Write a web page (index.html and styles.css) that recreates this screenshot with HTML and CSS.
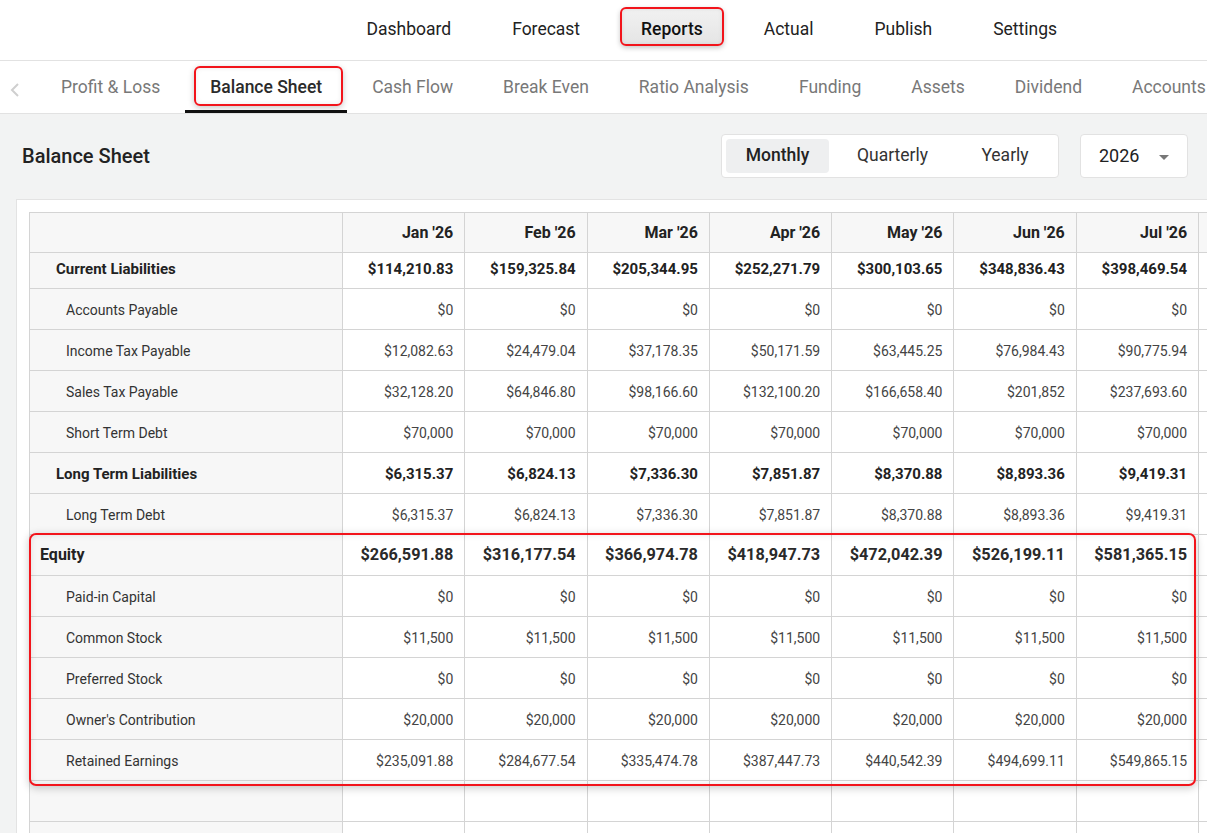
FILE: index.html
```html
<!DOCTYPE html>
<html>
<head>
<meta charset="utf-8">
<link rel="stylesheet" href="styles.css">
</head>
<body>
<header class="topnav">
  <nav class="topnav-items">
    <a class="top-item">Dashboard</a>
    <a class="top-item">Forecast</a>
    <a class="top-item top-item-active">Reports</a>
    <a class="top-item">Actual</a>
    <a class="top-item">Publish</a>
    <a class="top-item">Settings</a>
  </nav>
</header>
<div class="subnav">
  <div class="chev">
    <svg width="10" height="16" viewBox="0 0 10 16"><polyline points="8,2 2,8 8,14" fill="none" stroke="#cfcfcf" stroke-width="2"/></svg>
  </div>
  <a class="tab">Profit &amp; Loss</a>
  <a class="tab tab-active">Balance Sheet<span class="tab-mark"></span></a>
  <a class="tab">Cash Flow</a>
  <a class="tab">Break Even</a>
  <a class="tab">Ratio Analysis</a>
  <a class="tab">Funding</a>
  <a class="tab">Assets</a>
  <a class="tab">Dividend</a>
  <a class="tab">Accounts</a>
</div>
<main class="content">
  <div class="toolbar">
    <h1 class="title">Balance Sheet</h1>
    <div class="spacer"></div>
    <div class="segmented">
      <button class="seg seg-active">Monthly</button>
      <button class="seg">Quarterly</button>
      <button class="seg">Yearly</button>
    </div>
    <div class="year">
      <span>2026</span>
      <span class="caret"></span>
    </div>
  </div>
  <section class="card">
    <div class="table-wrap">
      <table class="grid">
        <colgroup>
          <col class="c-label"><col class="c-m"><col class="c-m"><col class="c-m"><col class="c-m"><col class="c-m"><col class="c-m"><col class="c-m"><col class="c-m">
        </colgroup>
        <thead>
          <tr class="r-head"><th class="lbl"></th><th>Jan '26</th><th>Feb '26</th><th>Mar '26</th><th>Apr '26</th><th>May '26</th><th>Jun '26</th><th>Jul '26</th><th></th></tr>
        </thead>
        <tbody>
          <tr class="r-group r-first"><td class="lbl">Current Liabilities</td><td>$114,210.83</td><td>$159,325.84</td><td>$205,344.95</td><td>$252,271.79</td><td>$300,103.65</td><td>$348,836.43</td><td>$398,469.54</td><td></td></tr>
          <tr class="r-child"><td class="lbl">Accounts Payable</td><td>$0</td><td>$0</td><td>$0</td><td>$0</td><td>$0</td><td>$0</td><td>$0</td><td></td></tr>
          <tr class="r-child"><td class="lbl">Income Tax Payable</td><td>$12,082.63</td><td>$24,479.04</td><td>$37,178.35</td><td>$50,171.59</td><td>$63,445.25</td><td>$76,984.43</td><td>$90,775.94</td><td></td></tr>
          <tr class="r-child"><td class="lbl">Sales Tax Payable</td><td>$32,128.20</td><td>$64,846.80</td><td>$98,166.60</td><td>$132,100.20</td><td>$166,658.40</td><td>$201,852</td><td>$237,693.60</td><td></td></tr>
          <tr class="r-child"><td class="lbl">Short Term Debt</td><td>$70,000</td><td>$70,000</td><td>$70,000</td><td>$70,000</td><td>$70,000</td><td>$70,000</td><td>$70,000</td><td></td></tr>
          <tr class="r-group"><td class="lbl">Long Term Liabilities</td><td>$6,315.37</td><td>$6,824.13</td><td>$7,336.30</td><td>$7,851.87</td><td>$8,370.88</td><td>$8,893.36</td><td>$9,419.31</td><td></td></tr>
          <tr class="r-child"><td class="lbl">Long Term Debt</td><td>$6,315.37</td><td>$6,824.13</td><td>$7,336.30</td><td>$7,851.87</td><td>$8,370.88</td><td>$8,893.36</td><td>$9,419.31</td><td></td></tr>
          <tr class="r-section"><td class="lbl">Equity</td><td>$266,591.88</td><td>$316,177.54</td><td>$366,974.78</td><td>$418,947.73</td><td>$472,042.39</td><td>$526,199.11</td><td>$581,365.15</td><td></td></tr>
          <tr class="r-child"><td class="lbl">Paid-in Capital</td><td>$0</td><td>$0</td><td>$0</td><td>$0</td><td>$0</td><td>$0</td><td>$0</td><td></td></tr>
          <tr class="r-child"><td class="lbl">Common Stock</td><td>$11,500</td><td>$11,500</td><td>$11,500</td><td>$11,500</td><td>$11,500</td><td>$11,500</td><td>$11,500</td><td></td></tr>
          <tr class="r-child"><td class="lbl">Preferred Stock</td><td>$0</td><td>$0</td><td>$0</td><td>$0</td><td>$0</td><td>$0</td><td>$0</td><td></td></tr>
          <tr class="r-child"><td class="lbl">Owner's Contribution</td><td>$20,000</td><td>$20,000</td><td>$20,000</td><td>$20,000</td><td>$20,000</td><td>$20,000</td><td>$20,000</td><td></td></tr>
          <tr class="r-child"><td class="lbl">Retained Earnings</td><td>$235,091.88</td><td>$284,677.54</td><td>$335,474.78</td><td>$387,447.73</td><td>$440,542.39</td><td>$494,699.11</td><td>$549,865.15</td><td></td></tr>
          <tr class="r-child"><td class="lbl"></td><td></td><td></td><td></td><td></td><td></td><td></td><td></td><td></td></tr>
          <tr class="r-child"><td class="lbl"></td><td></td><td></td><td></td><td></td><td></td><td></td><td></td><td></td></tr>
        </tbody>
      </table>
      <div class="equity-mark"></div>
    </div>
  </section>
</main>
</body>
</html>
```

FILE: styles.css
```css
html, body {
  margin: 0;
  padding: 0;
  overflow: hidden;
  width: 1207px;
  height: 833px;
}
body {
  font-family: Roboto, "Liberation Sans", sans-serif;
  color: #222;
  background: #f2f3f3;
}
a { text-decoration: none; cursor: pointer; }

.topnav {
  height: 61px;
  box-sizing: border-box;
  background: #fff;
  border-bottom: 1px solid #e2e2e2;
}
.topnav-items {
  display: flex;
  gap: 18px;
  padding: 7px 0 0 345px;
}
.top-item {
  display: flex;
  align-items: center;
  height: 39px;
  box-sizing: border-box;
  padding: 5px 19.5px 0;
  border: 2px solid transparent;
  border-radius: 6px;
  font-size: 17.5px;
  color: #222;
}
.top-item-active {
  border-color: #f2141b;
  background: linear-gradient(#f1f1f1, #e5e5e5);
  box-shadow: 0 2px 5px rgba(0,0,0,0.22), inset 0 0 4px rgba(0,0,0,0.08);
  font-weight: 500;
  color: #111;
}

.subnav {
  display: flex;
  height: 53px;
  box-sizing: border-box;
  background: #fff;
  border-bottom: 1px solid #e2e2e2;
  white-space: nowrap;
}
.chev {
  width: 36px;
  flex: none;
  display: flex;
  align-items: center;
  padding-left: 10px;
  box-sizing: border-box;
  padding-top: 6px;
}
.tab {
  position: relative;
  flex: none;
  display: flex;
  align-items: center;
  height: 52px;
  box-sizing: border-box;
  padding: 0 25px 1px;
  font-size: 17.5px;
  color: #787878;
}
.tab-active {
  color: #2b2b2b;
  font-weight: 500;
  border-bottom: 3px solid #111;
  padding-top: 2px;
  padding-bottom: 0;
}
.tab-mark {
  position: absolute;
  left: 9px;
  top: 5px;
  right: 4px;
  height: 40px;
  box-sizing: border-box;
  border: 2px solid #f2141b;
  border-radius: 6px;
  box-shadow: 0 2px 6px rgba(0,0,0,0.22), inset 0 0 5px rgba(0,0,0,0.08);
}

.content {
  background: #f2f3f3;
}
.toolbar {
  display: flex;
  align-items: center;
  padding: 20px 19px 21px 22px;
}
.title {
  margin: 0;
  font-size: 20px;
  font-weight: 500;
  color: #222;
}
.spacer { flex: 1; }
.segmented {
  display: grid;
  grid-template-columns: 103px 127px 98px;
  height: 44px;
  box-sizing: border-box;
  padding: 4px;
  background: #fff;
  border: 1px solid #e2e2e2;
  border-radius: 4px;
}
.seg {
  border: 0;
  background: transparent;
  font-family: inherit;
  font-size: 17.5px;
  color: #333;
  border-radius: 4px;
  padding: 0 0 2px;
}
.seg-active {
  background: #eeeff0;
  font-weight: 500;
  color: #222;
}
.year {
  margin-left: 21px;
  width: 108px;
  height: 44px;
  box-sizing: border-box;
  display: flex;
  align-items: center;
  padding: 0 18px 2px 18px;
  justify-content: space-between;
  background: #fff;
  border: 1px solid #e2e2e2;
  border-radius: 4px;
  font-size: 18px;
  color: #222;
}
.caret {
  width: 0;
  height: 0;
  border-left: 5px solid transparent;
  border-right: 5px solid transparent;
  border-top: 5px solid #777;
  margin-top: 4px;
}

.card {
  margin-left: 16px;
  width: 1400px;
  background: #fff;
  border: 1px solid #e3e3e3;
  padding: 12px;
  box-sizing: border-box;
  height: 700px;
}
.table-wrap {
  position: relative;
}
.grid {
  border-collapse: collapse;
  table-layout: fixed;
  width: 1292px;
}
.c-label { width: 313px; }
.c-m { width: 122.3px; }
.grid th, .grid td {
  border: 1px solid #d4d4d4;
  padding: 0 11px 0 0;
  text-align: right;
  white-space: nowrap;
  overflow: hidden;
}
.grid th {
  height: 39px;
  background: #f7f7f7;
  font-size: 16px;
  font-weight: 700;
  color: #222;
}
.grid td {
  height: 38px;
  padding-top: 2px;
  font-size: 14px;
  color: #444;
}
.grid .lbl {
  text-align: left;
  background: #f7f7f7;
  padding-left: 36px;
  color: #333;
}
.grid .r-first td { height: 31px; padding-top: 0; padding-bottom: 4px; }
.r-group td {
  font-size: 15px;
  font-weight: 700;
  color: #222;
}
.grid .r-group .lbl { padding-left: 26px; color: #222; }
.grid .r-section td {
  height: 38px;
  padding-top: 0;
  padding-bottom: 2px;
  font-size: 16.3px;
  font-weight: 700;
  color: #2a2a2a;
}
.grid .r-section .lbl { padding-left: 10px; font-size: 16px; color: #222; }

.equity-mark {
  position: absolute;
  left: 0;
  top: 321px;
  width: 1167px;
  height: 253px;
  box-sizing: border-box;
  border: 2px solid #f2141b;
  border-radius: 7px;
  box-shadow: 0 2px 8px rgba(0,0,0,0.22), inset 0 0 6px rgba(0,0,0,0.1);
  pointer-events: none;
}
```
